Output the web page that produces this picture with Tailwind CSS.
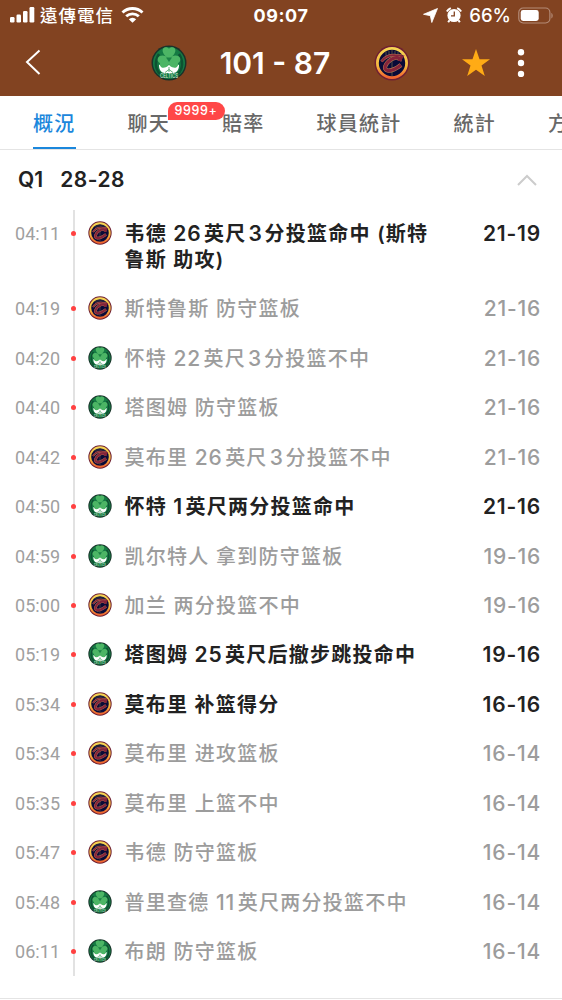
<!DOCTYPE html>
<html lang="zh-Hant">
<head>
  <meta charset="UTF-8"/>
  <meta name="viewport" content="width=device-width, initial-scale=1.0"/>
  <title>101 - 87</title>
  <script src="https://cdn.jsdelivr.net/npm/@tailwindcss/browser@4"></script>
</head>
<body class="h-[1000px] overflow-hidden bg-white font-['Inter','Noto_Sans_CJK_TC',sans-serif]">

<!-- team logos -->
<svg class="absolute h-0 w-0">
  <linearGradient id="ring" x1="0" y1="0" x2="0" y2="1">
    <stop offset="0" stop-color="#f6d553"/><stop offset=".6" stop-color="#f5b83f"/><stop offset="1" stop-color="#f1642f"/>
  </linearGradient>
  <symbol id="celtics" viewBox="0 0 36 36">
    <circle cx="18" cy="18" r="17.500" fill="#19332a"/>
    <circle cx="18" cy="18" r="16" fill="#157a43"/>
    <path d="M8 9C3.500 16 4 24 9 29M28 9c4.500 7 4 15-1 20" fill="none" stroke="#0d5132" stroke-width="2.500"/>
    <path d="M8 19.500c-.3 5 2.500 8.500 6 8.500h8c3.500 0 6.300-3.500 6-8.500l-4 2.500-6-2-6 2z" fill="#fff"/>
    <path d="M18 14C13.500 11 10.500 7 12 3.800c1.800-2.500 5-1.600 6 0 1-1.600 4.200-2.500 6 0C25.500 7 22.500 11 18 14z" fill="#4cb565"/>
    <path d="M17.800 14C15 9.800 9 9.500 7.200 12.500c-1.400 2.600.2 5 1.800 5.500-.4 2.800 1.200 5 3.500 4.800 3.500-.2 5-2.300 5.500-3.800.5 1.500 2 3.600 5.500 3.800 2.300.2 3.900-2 3.500-4.800 1.600-.5 3.200-2.900 1.800-5.500C27 9.500 21 9.800 18.200 14z" fill="#4cb565"/>
    <path d="M15 12.500h6L18 17z" fill="#1c8246"/>
    <path d="M18 22v5M14 27.500l4-3 4 3" stroke="#3c9a5c" stroke-width=".8" fill="none"/>
    <text x="18" y="33" text-anchor="middle" textLength="18" lengthAdjust="spacingAndGlyphs" font-size="6" font-weight="500" fill="#d0e0d4">CELTICS</text>
  </symbol>
  <symbol id="cavs" viewBox="0 0 36 36">
    <circle cx="18" cy="18" r="17.500" fill="#6f2032"/>
    <circle cx="18" cy="18" r="14.600" fill="#090a38" stroke="url(#ring)" stroke-width="2.800"/>
    <path d="M18 5v26M12 6.500v5M24 6.500v5M15 6v4M21 6v4" stroke="#5c5646" stroke-width=".9" fill="none"/>
    <g fill="none" stroke-linejoin="round">
      <g stroke="#b87a50" stroke-width="4.200">
        <path d="M25.500 16c1-4-4-4.500-8.500-1.500-6 4-8 10-3.500 11 4 .6 9-2 13.500-5.500"/>
        <path d="M7.500 16.500c3-4.500 9-7 14.500-6.200l6 .4" stroke-width="2.800"/>
      </g>
      <g stroke="#85233a" stroke-width="3.200">
        <path d="M25.500 16c1-4-4-4.500-8.500-1.500-6 4-8 10-3.500 11 4 .6 9-2 13.500-5.500"/>
        <path d="M7.500 16.500c3-4.500 9-7 14.500-6.200l6 .4" stroke-width="1.800"/>
      </g>
      <path d="M24 15.500l2.500-4.500 4-.8-3.500 6z" fill="#85233a"/>
    </g>
  </symbol>
</svg>

<div class="bg-[#824321] text-white">
  <!-- status bar -->
  <div class="grid h-[30px] grid-cols-3 items-center pr-[9px] pl-[9px]">
    <div class="flex items-center">
      <svg class="h-4 w-[26px]" viewBox="0 0 26 16" fill="#fff">
        <rect x="1" y="10" width="4.500" height="5.500" rx="1.200"/><rect x="7.500" y="7.500" width="4.500" height="8" rx="1.200"/>
        <rect x="14" y="4" width="4.500" height="11.500" rx="1.200"/><rect x="20.500" y="0" width="4.800" height="15.500" rx="1.200"/>
      </svg>
      <span class="ml-[5px] pt-px text-[17.500px] leading-none font-medium tracking-[1px] whitespace-nowrap">遠傳電信</span>
      <svg class="ml-[7px] h-4 w-[23px]" viewBox="0 0 23 16" fill="none" stroke="#fff" stroke-width="2.900">
        <path d="M1.500 5.500a14.500 14.500 0 0 1 20 0M5.200 9.300a9.300 9.300 0 0 1 12.600 0"/>
        <path d="M11.500 15.800L7.800 12.300a5.300 5.300 0 0 1 7.400 0z" fill="#fff" stroke="none"/>
      </svg>
    </div>
    <div class="pt-px text-center text-[18px] font-bold tracking-[0.6px]">09:07</div>
    <div class="flex items-center justify-end">
      <svg class="h-[15px] w-[15px]" viewBox="0 0 15 15" fill="#fff"><path d="M14.500.5L8.800 14.500 7.300 7.700.5 6.300z" stroke="#fff" stroke-width=".8" stroke-linejoin="round"/></svg>
      <svg class="ml-[8px] h-4 w-4" viewBox="0 0 16 16">
        <circle cx="8" cy="8.500" r="6.600" fill="#fff"/>
        <path d="M.8 4.500A9 9 0 0 1 4.800 1.200M15.200 4.500a9 9 0 0 0-4-3.300M3.500 13.200l-1.300 2M12.500 13.200l1.300 2" stroke="#fff" stroke-width="2" fill="none"/>
        <path d="M8.300 4.500v4.300H5" stroke="#824321" stroke-width="1.300" fill="none"/>
      </svg>
      <span class="ml-[7px] pt-px text-[18.500px] leading-none font-medium">66%</span>
      <svg class="ml-[7px] h-[17px] w-[35px]" viewBox="0 0 36 17">
        <rect x=".8" y=".8" width="32" height="15.400" rx="4.500" fill="none" stroke="#b38b77" stroke-width="1.200"/>
        <rect x="2.800" y="2.800" width="18.500" height="11.400" rx="2.500" fill="#fff"/>
        <path d="M34.300 6v5.500c1.800-.6 1.800-4.900 0-5.500z" fill="#b38b77"/>
      </svg>
    </div>
  </div>

  <!-- match header -->
  <div class="flex h-[66px] items-center pl-[25px]">
    <svg class="-mt-[2px] h-[26px] w-[16px]" viewBox="0 0 16 26" fill="none" stroke="#fff" stroke-width="2"><path d="M14.500 1.500L2 13l12.500 12"/></svg>
    <svg class="-mt-px ml-[110px] h-9 w-9"><use href="#celtics"/></svg>
    <h1 class="ml-8 w-[112px] text-center text-[30px] leading-none font-semibold whitespace-nowrap">101 - 87</h1>
    <svg class="-mt-px ml-[43px] h-9 w-9"><use href="#cavs"/></svg>
    <svg class="ml-[52px] h-7 w-7" viewBox="0 0 28 28" fill="#ffab15"><path d="M14 0l3.500 10.200H28l-8.500 6.400L22.800 27 14 20.700 5.200 27l3.300-10.400L0 10.200h10.500z"/></svg>
    <svg class="ml-[27px] h-7 w-[8px]" viewBox="0 0 8 28" fill="#fff"><circle cx="4" cy="3.200" r="3.200"/><circle cx="4" cy="14" r="3.200"/><circle cx="4" cy="25" r="3.200"/></svg>
  </div>
</div>

<!-- tabs -->
<nav class="flex h-[54px] gap-[52px] overflow-hidden border-b border-[#e4e4e4] pl-[33px] text-[20px] leading-[56px] font-medium tracking-[1.250px] whitespace-nowrap text-[#686868]">
  <div class="h-[53px] border-b-2 border-[#1b87dc] text-[#1b87dc]">概況</div>
  <div class="relative">聊天
    <span class="absolute top-[6px] left-[40px] h-[18px] w-[57px] rounded-t-[9px] rounded-br-[9px] bg-[#ff4747] text-center text-[12.500px] leading-[18px] font-medium tracking-[0.600px] text-white">9999+</span>
  </div>
  <div>賠率</div>
  <div>球員統計</div>
  <div>統計</div>
  <div>方</div>
</nav>

<!-- quarter -->
<div class="flex h-[60px] items-center pr-[25px] pl-[18px] text-[21px] font-semibold text-[#222]">
  <span>Q1</span>
  <span class="ml-[17px] tracking-[0.5px]">28-28</span>
  <svg class="ml-auto h-3 w-5" viewBox="0 0 20 12" fill="none" stroke="#ccc" stroke-width="2"><path d="M1 11l9-9 9 9"/></svg>
</div>

<!-- play by play -->
<div class="relative flow-root h-[766px]">
  <div class="absolute top-0 left-[73px] h-full w-[2px] bg-[#e2e2e2]"></div>
  <div id="plays" lang="zh-Hans" class="relative -mt-[0.600px] font-['Inter','Noto_Sans_CJK_SC',sans-serif]"></div>
</div>
<div class="mt-[22px] h-px bg-[#e4e4e4]"></div>

<script>
// time, team, text, score, scored; | marks a number with wide gaps round it
const plays = [
  ['04:11','cavs','韦德 26英尺|3|分投篮命中 (斯特<br>鲁斯 助攻)','21-19',1],
  ['04:19','cavs','斯特鲁斯 防守篮板','21-16'],
  ['04:20','celtics','怀特 22英尺|3|分投篮不中','21-16'],
  ['04:40','celtics','塔图姆 防守篮板','21-16'],
  ['04:42','cavs','莫布里 26英尺|3|分投篮不中','21-16'],
  ['04:50','celtics','怀特 1英尺两分投篮命中','21-16',1],
  ['04:59','celtics','凯尔特人 拿到防守篮板','19-16'],
  ['05:00','cavs','加兰 两分投篮不中','19-16'],
  ['05:19','celtics','塔图姆 25英尺后撤步跳投命中','19-16',1],
  ['05:34','cavs','莫布里 补篮得分','16-16',1],
  ['05:34','cavs','莫布里 进攻篮板','16-14'],
  ['05:35','cavs','莫布里 上篮不中','16-14'],
  ['05:47','cavs','韦德 防守篮板','16-14'],
  ['05:48','celtics','普里查德 11英尺两分投篮不中','16-14'],
  ['06:11','celtics','布朗 防守篮板','16-14'],
];
const spaced = text => text
  .replace(/(\d+)英/, '<span class="mr-[2.500px] text-[21px] leading-none tracking-[0.800px]">$1</span>英')
  .replace(/\|(.)\|/, '<span class="mr-[2px] ml-[2px] text-[21px] leading-none tracking-[0.800px]">$1</span>');

document.getElementById('plays').innerHTML = plays.map(([time, team, text, score, hit]) => `
  <div class="flex items-start pt-[13px] pb-[11px] pl-[15px] pr-[21px] text-[20px] leading-[25.460px] tracking-[1.250px] ${hit ? 'font-semibold text-[#222]' : 'font-medium text-[#9c9c9c]'}">
    <span class="-mt-px w-[56px] font-['Roboto'] text-[18px] font-normal tracking-[0.050px] text-[#a0a0a0]">${time}</span>
    <span class="mt-[9px] h-[5px] w-[5px] rounded-full bg-[#ff4040]"></span>
    <svg class="-mt-px ml-[12px] h-6 w-6"><use href="#${team}"/></svg>
    <span class="ml-[12.500px] whitespace-nowrap">${spaced(text)}</span>
    <span class="-mt-px ml-auto text-[21px] tracking-[0.800px] whitespace-nowrap">${score}</span>
  </div>`).join('');
</script>
</body>
</html>
